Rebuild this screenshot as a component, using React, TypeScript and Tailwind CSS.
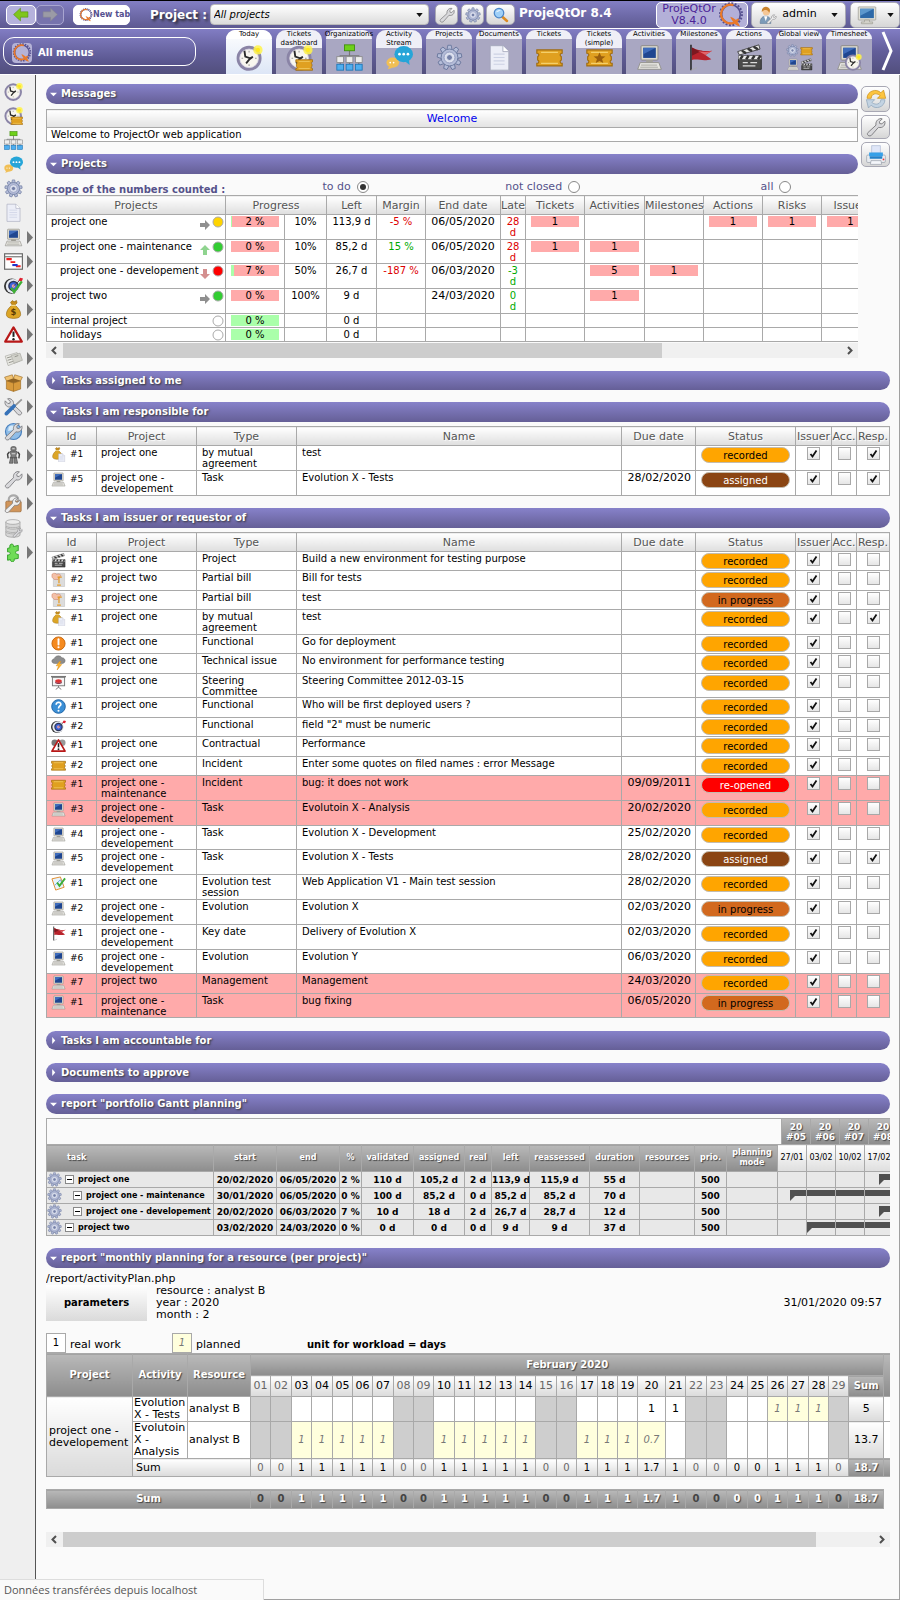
import React from "react";

type P = { n: string; className?: string };

const Gear = ({ fill = "#b4bcd8" }: { fill?: string }) => (
  <g>
    {[0, 40, 80, 120, 160, 200, 240, 280, 320].map((a) => (
      <path key={a} d="M13 7 L14 1.500 H18 L19 7 Z" fill={fill} stroke="#66749a" strokeWidth="1" transform={`rotate(${a} 16 16)`} />
    ))}
    <circle cx="16" cy="16" r="10" fill={fill} stroke="#66749a" />
    <circle cx="16" cy="16" r="6.500" fill="#dde1ef" stroke="#8993b8" />
    <circle cx="16" cy="16" r="3.500" fill="#7480a8" stroke="#e8ebf5" />
  </g>
);
const Clock = () => (
  <g>
    <circle cx="15.500" cy="17" r="13" fill="#f8f6ee" stroke="#8a84a6" strokeWidth="3.600" />
    <circle cx="15.500" cy="17" r="11" fill="none" stroke="#d8d4e4" strokeWidth="1" />
    <path d="M15.500 8v2M15.500 24v2M6.500 17h2M22.500 17h2" stroke="#999" strokeWidth="1.200" />
    <path d="M10 8l1 7 6 2 3-2-4 3-4 5" fill="none" stroke="#2a2a2a" strokeWidth="2.200" />
    <circle cx="26" cy="7" r="5.500" fill="#fff34a" opacity=".85" />
    <circle cx="26" cy="7" r="2.500" fill="#ffe81c" />
  </g>
);
const Ticket = () => (
  <g>
    <path d="M1 7H31V11c-3 0-3 3-1 4v4c-2 1-2 4 1 4v3H1V23c3 0 3-3 1-4v-4c2-1 2-4-1-4Z" fill="#e0a020" stroke="#a06c10" strokeWidth="1.400" />
    <path d="M6 10h20M6 23h20" stroke="#f4cf6a" strokeWidth="1.400" />
  </g>
);
const Computer = () => (
  <g>
    <rect x="6" y="2" width="20" height="17" rx="1" fill="#dddad0" stroke="#85837c" />
    <rect x="8.500" y="4.500" width="15" height="12" fill="#1f4690" />
    <path d="M8.500 4.500h15L8.500 12Z" fill="#3f6cbb" />
    <path d="M12 19h8v3h-8Z" fill="#a3a199" />
    <path d="M5 22h22l3 8H2Z" fill="#e6e5e0" stroke="#8e8d87" />
    <path d="M6 25h19M5 27.500h21" stroke="#a3a29c" />
  </g>
);
const Doc = () => (
  <g>
    <path d="M5 2h15l7 7v22H5Z" fill="#eceef7" stroke="#a3a7ba" />
    <path d="M20 2v7h7" fill="#fff" stroke="#a3a7ba" />
    <path d="M9 12h13M9 16h13M9 20h13M9 24h13" stroke="#cbd1e4" strokeWidth="1.200" />
  </g>
);
const Clap = () => (
  <g>
    <path d="M3 14h27v16H3Z" fill="#4a4a4a" stroke="#222" />
    <path d="M2 9 27 1l1.500 5L4 13Z" fill="#e8e8e8" stroke="#333" />
    <path d="M7 8l5 3M14 5.500l5 3M21 3.300l5 3" stroke="#333" strokeWidth="3" />
    <path d="M3 14h27v4H3Z" fill="#e8e8e8" />
    <path d="M8 14l-3 4M15 14l-3 4M22 14l-3 4M29 14l-3 4" stroke="#333" strokeWidth="3" />
    <path d="M8 22h6M17 22h8M8 26h15" stroke="#ddd" strokeWidth="1.600" />
  </g>
);
const Wrench = ({ c = "#d9d9dc" }: { c?: string }) => (
  <path d="M3 25 16 13c-1-5 2-10 8-10.500l2 .5-4.500 4.500.5 3 3.500.5 4.500-4.500c2 7-4 12-10 10L8.500 29.500c-4 2.500-8-1.500-5.500-4.500Z" fill={c} stroke="#7d7d80" strokeWidth="1.500" />
);
const Bag = () => (
  <g>
    <path d="M11 4l3-3 3 2 4-2 1 4-4 4h-4Z" fill="#c78d1b" stroke="#8a5d08" />
    <path d="M13 9h6c6 5 9 10 9 15 0 4-3 7-12 7S4 28 4 24c0-5 3-10 9-15Z" fill="#dca526" stroke="#94660d" />
    <path d="M12 9h8" stroke="#f7df91" strokeWidth="2" />
  </g>
);
const Warn = () => (
  <g>
    <path d="M16 4 30 28H2Z" fill="#fff" stroke="#b81818" strokeWidth="3.600" strokeLinejoin="round" />
    <path d="M16 11v9" stroke="#222" strokeWidth="3.400" />
    <circle cx="16" cy="24" r="2" fill="#222" />
  </g>
);
const Target = () => (
  <g>
    <circle cx="13" cy="17" r="13" fill="#333" />
    <circle cx="15" cy="17" r="12" fill="#e8ebf2" />
    <circle cx="16" cy="17" r="9" fill="#2c3558" />
    <circle cx="16" cy="17" r="6.500" fill="#3c63d8" />
    <circle cx="16" cy="17" r="3" fill="#e9a0b0" />
    <path d="M16 17 29 5" stroke="#444" strokeWidth="1.500" />
    <path d="M24 8l3-5 5 1-2 5Z" fill="#e02030" />
  </g>
);

function draw(n: string): React.ReactNode {
  switch (n) {
    case "clock": return <Clock />;
    case "clockTicket": return <><Clock /><g transform="translate(11 14) scale(.66)"><Ticket /></g></>;
    case "org": return (
      <g>
        <path d="M16 8v7M5 18v-4h22v4M16 14v10M5 20v5M27 20v5" fill="none" stroke="#777" strokeWidth="1.400" />
        <rect x="10" y="1" width="12" height="7" fill="#6ed01a" stroke="#3d8c08" />
        {[1, 12, 23].map((x) => <g key={x}><rect x={x} y="15" width="8" height="7" fill="#eee" stroke="#888" /><rect x={x} y="24" width="8" height="7" fill="#4eaef0" stroke="#1c74b4" /></g>)}
      </g>
    );
    case "chat": return (
      <g>
        <ellipse cx="8" cy="22" rx="7.500" ry="6" fill="#f1bf55" /><path d="M4 26l-2 4 6-2Z" fill="#f1bf55" />
        <ellipse cx="21" cy="12" rx="11" ry="9.500" fill="#26a5d8" /><path d="M22 20l6 5-1-7Z" fill="#26a5d8" />
        <circle cx="16" cy="12" r="1.600" fill="#fff" /><circle cx="21" cy="12" r="1.600" fill="#fff" /><circle cx="26" cy="12" r="1.600" fill="#fff" />
        <circle cx="5" cy="22" r="1" fill="#fff" /><circle cx="9" cy="22" r="1" fill="#fff" />
      </g>
    );
    case "gear": return <Gear />;
    case "doc": return <Doc />;
    case "ticket": return <Ticket />;
    case "ticketStar": return <><Ticket /><path d="M16 10l2 4.500 5 .3-4 3 1.500 4.700L16 20l-4.500 2.500L13 17.800l-4-3 5-.3Z" fill="#9a5e0c" /></>;
    case "computer": return <Computer />;
    case "flag": return <><path d="M5 1h1.800v30H5Z" fill="#222" /><path d="M7 4c8 4 16 5 24 4l-8 5 7 5c-10 3-16-1-23 1Z" fill="#b8232c" /><path d="M7 4c5 3 8 4 12 4L7 14Z" fill="#7c1820" /><path d="M14 8c6 2 11 2 17 0l-8 5Z" fill="#e0646a" /><path d="M6 31l7-3" stroke="#aaa" /></>;
    case "clap": return <Clap />;
    case "global": return <><g transform="scale(.48)"><Gear /></g><g transform="translate(17 1) scale(.46)"><Ticket /></g><g transform="translate(1 17) scale(.46)"><Computer /></g><g transform="translate(17 17) scale(.46)"><Clap /></g></>;
    case "timesheet": return <><Computer /><g transform="translate(10 11) scale(.65)"><Clock /></g></>;
    case "wrench": return <Wrench />;
    case "search": return <><path d="M18 19l10 9" stroke="#dc8b22" strokeWidth="5" strokeLinecap="round" /><circle cx="12" cy="12" r="9.500" fill="#9fd0f8" stroke="#4b86c8" strokeWidth="2.500" /><path d="M6 11c2-5 7-6 10-3-4 0-7 1-10 3Z" fill="#fff" /></>;
    case "user": return <><path d="M2 31c0-9 4-13 10-13s9 4 9 13Z" fill="#7c9bb8" stroke="#5b7894" /><path d="M9 18l3 9 3-9Z" fill="#fff" /><circle cx="13" cy="10" r="6.500" fill="#f5c796" /><path d="M5 11C4 2 12-1 17 3c4 3 2 7 1 9-1-4-4-5-8-5-2 0-3 2-5 4Z" fill="#c9822c" /><g transform="translate(13 14) scale(.58)"><Wrench c="#eee" /></g></>;
    case "monitor": return <><rect x="2" y="3" width="28" height="21" rx="1" fill="#e1e0d6" stroke="#8e8d86" /><rect x="5" y="6" width="22" height="15" fill="#2d69a8" /><path d="M5 6h22L5 17Z" fill="#5b97cd" /><path d="M12 24h8v3h5v3H7v-3h5Z" fill="#d2d1c9" stroke="#99988f" /></>;
    case "refresh": return <><path d="M3 15C3 4 17 0 23 7l4-4 3 12H18l4-4C16 6 9 9 9 15Z" fill="#fcc43f" stroke="#c98c12" /><path d="M29 17C29 28 15 32 9 25l-4 4-3-12h12l-4 4c6 5 13 2 13-4Z" fill="#c3d3e2" stroke="#8ba2b8" /></>;
    case "printer": return <><path d="M9 1h14v12H9Z" fill="#dfe6f8" stroke="#a8b4d0" /><rect x="1" y="16" width="30" height="12" rx="2" fill="#e8ebef" stroke="#9299a4" /><path d="M5 12h22v6H5Z" fill="#36a0e8" /><path d="M6 18h20v4H6Z" fill="#2380c8" /><path d="M8 25h16l1 6H7Z" fill="#f4f6fa" stroke="#9299a4" /><circle cx="28" cy="23" r="1.400" fill="#e33" /></>;
    case "right": return <path d="M3 11h14V4l13 12-13 12v-7H3Z" fill="#9b9ba6" stroke="#85858f" />;
    case "left": return <path d="M29 11H15V4L2 16l13 12v-7h14Z" fill="#7fc61c" stroke="#4f8a0a" />;
    case "logo": return (
      <g fill="none">
        <circle cx="16" cy="15" r="13.500" stroke="#565190" strokeWidth="2.500" strokeDasharray="2.400 1.840" />
        <circle cx="16" cy="15" r="11.500" stroke="#565190" strokeWidth="2" />
        <path d="M19 4a11.500 11.500 0 1 0 6 17" stroke="#e9792a" strokeWidth="2.800" /><path d="M15 18c5 1 10 6 12 12-5-1-9-5-12-12Z" fill="#e9792a" />
      </g>
    );
    case "gantt": return <><rect x="1" y="3" width="30" height="26" fill="#fff" stroke="#6b6b6b" strokeWidth="2" /><path d="M1 8h30" stroke="#777" strokeWidth="2" /><path d="M4 12h9M20 24h8" stroke="#e22" strokeWidth="3.500" /><path d="M11 17h8" stroke="#e22" strokeWidth="3" /><path d="M14 22h9" stroke="#23c" strokeWidth="3.500" /></>;
    case "target": return <Target />;
    case "targetCheck": return <><Target /><path d="M12 20l5 7L30 9" fill="none" stroke="#3fae36" strokeWidth="4" /></>;
    case "bag": return <><Bag /><text x="16" y="26" textAnchor="middle" fontSize="14" fontWeight="bold" fill="#5b3c05" fontFamily="DejaVu Sans">$</text></>;
    case "bagDoc": return <><g transform="translate(0 0) scale(.85)"><Bag /></g><g transform="translate(13 13) scale(.6)"><Doc /></g></>;
    case "bill": return <><path d="M9 3h20v28H5V14Z" fill="#dcdcdc" stroke="#b4b4b4" /><path d="M2 5c4-4 8-2 10 0l5-1 4 3-6 9H7L2 11Z" fill="#f3c0a8" stroke="#c9755c" /><path d="M17 10v14M13 28h8M14 11h9" stroke="#e59a24" strokeWidth="2.600" /></>;
    case "warn": return <Warn />;
    case "warnRed": return <><circle cx="8" cy="10" r="7" fill="#777" /><circle cx="24" cy="10" r="7" fill="#999" /><Warn /></>;
    case "cards": return <><path d="M2 12 22 6l5 14L7 28Z" fill="#e9e9e4" stroke="#a1a19a" /><path d="M12 11 27 7l4 12-14 5Z" fill="#d2d2cb" stroke="#a1a19a" /><path d="M5 15l7-2M6 19l7-2M8 23l7-2M18 13l6-2" stroke="#8d8d86" strokeWidth="1.500" /></>;
    case "box": return <><path d="M4 13h24v14l-12 4L4 27Z" fill="#d89a3c" stroke="#95641c" /><path d="M4 13 1 7l13-4 2 6 2-6 13 4-3 6-12 4Z" fill="#f0c271" stroke="#95641c" /><path d="M4 13l12-4 12 4-12 4Z" fill="#8f6223" /><path d="M16 17v14" stroke="#95641c" /></>;
    case "tools": return <><g transform="translate(32 0) scale(-1 1)"><Wrench /></g><path d="M30 4 16 17" stroke="#999" strokeWidth="3" /><path d="M17 15 4 28" stroke="#3672b8" strokeWidth="6" strokeLinecap="round" /></>;
    case "globe": return <><circle cx="16" cy="16" r="13.500" fill="#8fbde8" stroke="#4a80bd" strokeWidth="2" /><path d="M8 8c5-4 11-2 11 2l-6 4-6 1Z" fill="#d8ebfa" /><Wrench /></>;
    case "robot": return <g fill="#808080" stroke="#444"><rect x="11.500" y="1" width="9" height="7.500" rx="3" /><path d="M10 9h12l-2 8 2 3H10l2-3Z" /><path d="M9 10l-3 4 1 7M23 10l3 4-1 7" fill="none" strokeWidth="2.500" /><path d="M11 20h4v9h-6Z" /><path d="M17 20h4l2 9h-6Z" /><path d="M13 13h6M14 4.500h4" stroke="#ddd" strokeWidth="1.500" /></g>;
    case "lock": return <><path d="M8 14V9c0-9 16-9 16 0v5" fill="none" stroke="#a9a9a9" strokeWidth="3.500" /><rect x="3" y="12" width="26" height="18" rx="2" fill="#d1955a" stroke="#8f5c28" /><g transform="translate(0 4) scale(.9)"><Wrench c="#eee" /></g></>;
    case "db": return <g fill="#d6d6d6" stroke="#8f8f8f">{[21, 13, 5].map((y) => <g key={y}><path d={`M3 ${y}v6c0 5 24 5 24 0v-6`} /><ellipse cx="15" cy={y} rx="12" ry="4" fill="#ececec" /></g>)}<g transform="translate(14 14) scale(.55)"><Wrench /></g></g>;
    case "puzzle": return <path d="M10 8c-2-8 7-8 6-2l8-2v9c-6-1-6 7 0 6v7l-7 1c2 6-7 6-6 1l-5 1v-9c6 1 6-6 0-5V9Z" fill="#6fdc57" stroke="#2c9a22" strokeWidth="1.500" />;
    case "excl": return <><circle cx="16" cy="16" r="14" fill="#f58a1f" stroke="#c9660b" strokeWidth="2" /><path d="M16 7v11" stroke="#fff" strokeWidth="4" strokeLinecap="round" /><circle cx="16" cy="24" r="2.300" fill="#fff" /></>;
    case "storm": return <><path d="M8 18c-8 0-8-9-1-10 2-8 14-8 16-2 8-1 10 11 2 12Z" fill="#8d8d8d" stroke="#666" /><path d="M18 14l-7 9h5l-3 9 10-12h-5l3-6Z" fill="#ffb52b" stroke="#d98a12" /></>;
    case "board": return <><path d="M0 2h32v3H0Z" fill="#777" /><rect x="3" y="5" width="26" height="18" fill="#f4f4f4" stroke="#777" strokeWidth="2" /><ellipse cx="16" cy="13" rx="7" ry="4" fill="#d33" /><path d="M9 14c3 4 11 4 14 0v3c-3 3-11 3-14 0Z" fill="#8a3a50" /><path d="M16 23v4M10 31l6-5 6 5" stroke="#777" strokeWidth="2" fill="none" /></>;
    case "question": return <><circle cx="16" cy="16" r="14.500" fill="#3b8fd6" stroke="#1d62a4" strokeWidth="2" /><path d="M11 12c0-7 11-6 10 0-1 3-5 3-5 8" fill="none" stroke="#fff" strokeWidth="3.500" /><circle cx="16" cy="25" r="2.200" fill="#fff" /></>;
    case "session": return <><path d="M2 6 20 2l8 22-18 6Z" fill="#e8f3fb" stroke="#e08b2a" strokeWidth="2" /><path d="M8 20 20 8l5 10" stroke="#5aa6dd" strokeWidth="2" fill="none" /><path d="M13 14l5 7L30 5" stroke="#3fae36" strokeWidth="4" fill="none" /></>;
    default: return null;
  }
}
const Icon = ({ n, className = "size-[15px]" }: P) => (
  <svg viewBox="0 0 32 32" aria-hidden="true" className={`shrink-0 ${className}`}>{draw(n)}</svg>
);

const HEAD = "bg-linear-to-b from-white to-[#dedede] text-[11px] leading-[13px] font-normal text-[#555] [text-shadow:1px_1px_1px_#fff]";
const CELL = "border border-[#a9a9a9]";
const DARK = "bg-linear-to-b from-[#b9b9b9] to-[#8d8d8d] font-bold text-white [text-shadow:1px_1px_1px_#444]";
const BTN = "flex items-center justify-center rounded-[5px] border border-[#a8a8b4] bg-linear-to-b from-white to-[#d6d6d6]";

function Section({ title, open = true }: { title: string; open?: boolean }) {
  return (
    <button type="button" aria-expanded={open} className={`flex w-full items-center gap-1 rounded-full bg-linear-to-b from-[#8782ca] to-[#655f97] pl-1 text-left text-[10px] leading-3 font-bold text-white [text-shadow:1px_1px_2px_#333] ${open ? "h-5" : "h-[19px]"}`}>
      <svg viewBox="0 0 8 8" className="size-[7px] shrink-0" aria-hidden="true">
        <path d={open ? "M0 2h8L4 6Z" : "M2.500 0 6 4 2.500 8Z"} fill="#fff" />
      </svg>
      {title}
    </button>
  );
}

function Scroll({ thumb }: { thumb: string }) {
  return (
    <div className="flex h-[15px] items-center bg-[#f0f0f0]">
      <svg viewBox="0 0 17 15" className="h-[15px] w-[17px] shrink-0" aria-hidden="true"><path d="M10 4 6.500 7.500 10 11" fill="none" stroke="#505050" strokeWidth="2" /></svg>
      <div className="h-full flex-1"><div className={`h-full bg-[#cdcdcd] ${thumb}`} /></div>
      <svg viewBox="0 0 17 15" className="h-[15px] w-[17px] shrink-0" aria-hidden="true"><path d="M7 4l3.500 3.500L7 11" fill="none" stroke="#505050" strokeWidth="2" /></svg>
    </div>
  );
}

const Caret = () => <svg viewBox="0 0 8 5" className="h-[4px] w-[7px] shrink-0" aria-hidden="true"><path d="M0 0h8L4 5Z" fill="#111" /></svg>;

const tabs: [string[], string][] = [
  [["Today"], "clock"], [["Tickets", "dashboard"], "clockTicket"], [["Organizations"], "org"], [["Activity", "Stream"], "chat"],
  [["Projects"], "gear"], [["Documents"], "doc"], [["Tickets"], "ticket"], [["Tickets", "(simple)"], "ticketStar"],
  [["Activities"], "computer"], [["Milestones"], "flag"], [["Actions"], "clap"], [["Global view"], "global"], [["Timesheet"], "timesheet"],
];

function TopBar() {
  return (
    <header className="border-t border-black">
      <div className="flex h-[27px] items-center bg-linear-to-b from-[#837fc4] to-[#5d5991] pl-[6px]">
        <button type="button" aria-label="Back" className="flex h-5 w-[30px] items-center justify-center rounded-[5px] border border-white bg-[#b5b2dc]"><Icon n="left" className="h-[17px] w-5" /></button>
        <button type="button" aria-label="Forward" className="flex h-5 w-7 items-center justify-center rounded-[5px] border border-[#a8a5d0] bg-[#7773ad]"><Icon n="right" className="h-[17px] w-5" /></button>
        <button type="button" className="ml-[9px] flex h-5 w-[57px] items-center rounded-[5px] border border-white bg-white pl-[5px] text-[8px] font-bold whitespace-nowrap text-[#565190]"><Icon n="logo" className="size-[14px]" />New tab</button>
        <label htmlFor="project" className="ml-[20px] w-[60px] text-[12px] font-bold whitespace-nowrap text-white [text-shadow:2px_2px_3px_#222]">Project :</label>
        <div className="grid h-[21px] w-[219px] items-center rounded-[4px] border border-[#bbb] bg-linear-to-b from-white to-[#dcdcdc]">
          <select id="project" className="col-start-1 row-start-1 h-full appearance-none bg-transparent pl-[3px] text-[10px] text-black italic"><option>All projects</option></select>
          <div className="pointer-events-none col-start-1 row-start-1 flex justify-end pr-[5px]"><Caret /></div>
        </div>
        <button type="button" aria-label="Tools" className={`${BTN} ml-[6px] h-[21px] w-[23px]`}><Icon n="wrench" className="size-4" /></button>
        <button type="button" aria-label="Settings" className={`${BTN} ml-[3px] h-[21px] w-[23px]`}><Icon n="gear" className="size-4" /></button>
        <button type="button" aria-label="Search" className={`${BTN} ml-[2px] h-[21px] w-[29px]`}><Icon n="search" className="size-4" /></button>
        <h1 className="ml-[4px] flex-1 pb-1 text-[12px] leading-[14px] font-bold whitespace-nowrap text-white">ProjeQtOr 8.4</h1>
        <a href="#about" className="flex h-[26px] w-[92px] items-center justify-between rounded-[5px] border border-white bg-[#b3b0d8] px-[3px] text-center text-[11px] leading-[12px] text-[#4b2296]">
          <span>ProjeQtOr V8.4.0</span><Icon n="logo" className="size-[26px]" />
        </a>
        <button type="button" className={`${BTN} ml-[3px] h-[26px] w-[95px] text-[11px] text-black`}><Icon n="user" className="mr-[5px] size-[18px]" /><span className="mr-[14px]">admin</span><Caret /></button>
        <button type="button" aria-label="Display" className={`${BTN} ml-[4px] h-[26px] w-[50px] gap-[10px]`}><Icon n="monitor" className="size-[20px]" /><Caret /></button>
      </div>
      <nav className="flex h-[47px] items-start border-y border-white bg-linear-to-b from-[#827dc4] via-[#625e9a] to-[#524f7d]">
        <button type="button" className="mt-2 ml-[3px] flex h-[29px] w-[193px] items-center gap-[6px] rounded-[11px] border border-white bg-linear-to-b from-[#7a76b8] to-[#55528a] pt-[2px] pl-2 text-[10px] font-bold text-white">
          <span className="rounded-[4px] bg-[#b5b2d6]"><Icon n="logo" className="size-5" /></span>All menus
        </button>
        <div className="ml-[30px] flex flex-1 gap-1 pt-px">
          {tabs.map(([label, icon], i) => (
            <a key={icon} href={`#${icon}`} className={`flex h-[44px] w-[46px] shrink-0 flex-col items-center rounded-t-[10px] ${i === 0 ? "bg-linear-to-b from-white to-[#dde6f6]" : "bg-[#a9a7c2]"}`}>
              <span className={`flex w-full flex-col items-center rounded-t-[10px] text-[7px] leading-[9px] whitespace-nowrap text-black ${i === 0 ? "bg-white" : "bg-[#efeff7]"}`}>{label.map((l) => <span key={l}>{l}</span>)}</span>
              <Icon n={icon} className={label.length > 1 ? "mt-[-4px] size-[27px]" : "mt-[5px] size-[27px]"} />
            </a>
          ))}
        </div>
        <button type="button" aria-label="Next menus" className="mr-[6px] h-[44px] w-[13px]"><svg viewBox="0 0 13 44" className="h-[44px] w-[13px]"><path d="M2 3l8 19L2 41" fill="none" stroke="#fff" strokeWidth="3" /></svg></button>
      </nav>
    </header>
  );
}

const side = ["clock", "clockTicket", "org", "chat", "gear", "doc", "computer", "gantt", "targetCheck", "bag", "warn", "cards", "box", "tools", "globe", "robot", "wrench", "lock", "db", "puzzle"];
function SideBar() {
  return (
    <aside className="w-9 shrink-0 border-r border-[#555] bg-[#efefef] pt-[7px]">
      <div className="flex h-[480px] flex-col justify-between">
        {side.map((n, i) => (
          <button key={n} type="button" aria-label={n} className="flex h-[19px] items-center gap-1 pl-1">
            <Icon n={n} className="size-[19px]" />
            {i > 5 && n !== "db" && <svg viewBox="0 0 5 12" className="h-[13px] w-[6px]" preserveAspectRatio="none" aria-hidden="true"><path d="M0 0l5 6-5 6Z" fill="#777" /></svg>}
          </button>
        ))}
      </div>
    </aside>
  );
}

type Pr = { name: string; sub?: boolean; arrow?: string; dot: string; pct: string; green?: string; exp?: string; left: string; margin?: string; end?: string; late?: string; ok?: boolean; counts: string[]; h: string };
const projects: Pr[] = [
  { name: "project one", arrow: "r", dot: "#ffd400", pct: "2 %", green: "w-px", exp: "10%", left: "113,9 d", margin: "-5 %", end: "06/05/2020", late: "28 d", counts: ["1", "", "", "1", "1", "1"], h: "h-[25px]" },
  { name: "project one - maintenance", sub: true, arrow: "u", dot: "#32cd32", pct: "0 %", exp: "10%", left: "85,2 d", margin: "15 %", end: "06/05/2020", late: "28 d", counts: ["1", "1", "", "", "", ""], h: "h-[24px]" },
  { name: "project one - developement", sub: true, arrow: "d", dot: "#ff0000", pct: "7 %", green: "w-[3px]", exp: "50%", left: "26,7 d", margin: "-187 %", end: "06/03/2020", late: "-3 d", ok: true, counts: ["", "5", "1", "", "", ""], h: "h-[25px]" },
  { name: "project two", arrow: "r", dot: "#32cd32", pct: "0 %", exp: "100%", left: "9 d", end: "24/03/2020", late: "0 d", ok: true, counts: ["", "1", "", "", "", ""], h: "h-[25px]" },
  { name: "internal project", dot: "#ffffff", pct: "0 %", left: "0 d", counts: ["", "", "", "", "", ""], h: "h-[14px]" },
  { name: "holidays", sub: true, dot: "#ffffff", pct: "0 %", left: "0 d", counts: ["", "", "", "", "", ""], h: "h-[14px]" },
];
const arrowRot: Record<string, [number, string]> = { r: [0, "#8f8f8f"], u: [-90, "#8fd48f"], d: [90, "#d48f8f"] };

function Projects() {
  return (
    <div className="overflow-hidden">
      <table className="w-[834px] table-fixed border-collapse bg-white text-[10px] leading-[11px]">
        <colgroup>
          <col className="w-[179px]" /><col className="w-[59px]" /><col className="w-[42px]" /><col className="w-[50px]" /><col className="w-[49px]" /><col className="w-[75px]" /><col className="w-[25px]" /><col className="w-[59px]" /><col className="w-[60px]" /><col className="w-[59px]" /><col className="w-[59px]" /><col className="w-[59px]" /><col />
        </colgroup>
        <thead>
          <tr className="h-[19px]">
            {["Projects", "Progress", "Left", "Margin", "End date", "Late", "Tickets", "Activities", "Milestones", "Actions", "Risks", "Issues"].map((h, i) => (
              <th key={h} colSpan={i === 1 ? 2 : 1} className={`${CELL} ${HEAD} whitespace-nowrap`}>{h}</th>
            ))}
          </tr>
        </thead>
        <tbody>
          {projects.map((p) => (
            <tr key={p.name} className={`${p.h} text-center align-top`}>
              <td className={`${CELL} pt-px text-left`}>
                <div className={`flex h-3 items-start pr-px ${p.sub ? "pl-[13px]" : "pl-1"}`}>
                  <span className="flex-1 whitespace-nowrap">{p.name}</span>
                  {p.arrow && <svg viewBox="0 0 10 10" className="mt-[4px] mr-[2px] h-[10px] w-[10px] shrink-0" aria-hidden="true"><path d="M0 3h5V0l5 5-5 5V7H0Z" fill={arrowRot[p.arrow][1]} transform={`rotate(${arrowRot[p.arrow][0]} 5 5)`} /></svg>}
                  <svg viewBox="0 0 12 12" className="size-3 shrink-0" aria-hidden="true"><circle cx="6" cy="6" r="5" fill={p.dot} stroke="#aaa" /></svg>
                </div>
              </td>
              <td className={`${CELL} px-[5px] pt-px`}>
                <div className={`grid ${p.exp ? "bg-[#ffaaaa]" : "bg-[#aaffaa]"}`}>
                  {p.green && <div className={`col-start-1 row-start-1 bg-[#aaffaa] ${p.green}`} />}
                  <span className="col-start-1 row-start-1">{p.pct}</span>
                </div>
              </td>
              <td className={`${CELL} pt-px`}>{p.exp}</td>
              <td className={`${CELL} pt-px whitespace-nowrap`}>{p.left}</td>
              <td className={`${CELL} pt-px whitespace-nowrap ${p.margin?.startsWith("-") ? "text-[#dd0000]" : "text-[#00aa00]"}`}>{p.margin}</td>
              <td className={`${CELL} pt-px text-[11px]`}>{p.end}</td>
              <td className={`${CELL} px-[5px] pt-px ${p.ok ? "text-[#00aa00]" : "text-[#dd0000]"}`}>{p.late}</td>
              {p.counts.map((c, i) => <td key={i} className={`${CELL} px-[5px] pt-px`}>{c && <div className="bg-[#ffaaaa]">{c}</div>}</td>)}
            </tr>
          ))}
        </tbody>
      </table>
    </div>
  );
}

function Check({ on, label }: { on: boolean; label: string }) {
  return (
    <span className="mx-auto grid size-[13px]">
      <input type="checkbox" defaultChecked={on} aria-label={label} className="peer col-start-1 row-start-1 size-[13px] appearance-none border border-[#a8a8a8] bg-linear-to-b from-white to-[#e6e6e6]" />
      <svg viewBox="0 0 13 13" className="pointer-events-none invisible col-start-1 row-start-1 size-[13px] peer-checked:visible" aria-hidden="true"><path d="M3.500 7l2 2.500L9.500 3.500" fill="none" stroke="#111" strokeWidth="1.800" /></svg>
    </span>
  );
}

const R = "bg-[#ffa500] text-black", I = "bg-[#d2691e] text-black", A = "bg-[#8b4513] text-white", O = "bg-[#ff0000] text-white";
const statusText: Record<string, string> = { [R]: "recorded", [I]: "in progress", [A]: "assigned", [O]: "re-opened" };
type Task = [icon: string, id: string, project: string, type: string, name: string, due: string, status: string, resp: boolean, h: string, late?: boolean];
const one = "project one", dev = "project one - developement", mnt = "project one - maintenance";
const H19 = "h-[19px]", H20 = "h-[20px]", H24 = "h-[24px]", H25 = "h-[25px]";
const mine: Task[] = [
  ["bagDoc", "#1", one, "by mutual agreement", "test", "", R, true, H25],
  ["computer", "#5", dev, "Task", "Evolution X - Tests", "28/02/2020", A, true, H25],
];
const issued: Task[] = [
  ["clap", "#1", one, "Project", "Build a new environment for testing purpose", "", R, false, H19],
  ["bill", "#2", "project two", "Partial bill", "Bill for tests", "", R, false, H20],
  ["bill", "#3", one, "Partial bill", "test", "", I, false, H19],
  ["bagDoc", "#1", one, "by mutual agreement", "test", "", R, true, H25],
  ["excl", "#1", one, "Functional", "Go for deployment", "", R, false, H19],
  ["storm", "#1", one, "Technical issue", "No environment for performance testing", "", R, false, H20],
  ["board", "#1", one, "Steering Committee", "Steering Committee 2012-03-15", "", R, false, H24],
  ["question", "#1", one, "Functional", "Who will be first deployed users ?", "", R, false, H20],
  ["target", "#2", "", "Functional", "field \"2\" must be numeric", "", R, false, H19],
  ["warnRed", "#1", one, "Contractual", "Performance", "", R, false, H20],
  ["ticket", "#2", one, "Incident", "Enter some quotes on filed names : error Message", "", R, false, H19],
  ["ticket", "#1", mnt, "Incident", "bug: it does not work", "09/09/2011", O, false, H25, true],
  ["computer", "#3", dev, "Task", "Evolutoin X - Analysis", "20/02/2020", R, false, H25, true],
  ["computer", "#4", dev, "Task", "Evolution X - Development", "25/02/2020", R, false, H24],
  ["computer", "#5", dev, "Task", "Evolution X - Tests", "28/02/2020", A, true, H25],
  ["session", "#1", one, "Evolution test session", "Web Application V1 - Main test session", "28/02/2020", R, false, H25],
  ["computer", "#2", dev, "Evolution", "Evolution X", "02/03/2020", I, false, H25],
  ["flag", "#1", dev, "Key date", "Delivery of Evolution X", "02/03/2020", R, false, H25],
  ["computer", "#6", dev, "Evolution", "Evolution Y", "06/03/2020", R, false, H24],
  ["computer", "#7", "project two", "Management", "Management", "24/03/2020", R, false, H20, true],
  ["computer", "#1", mnt, "Task", "bug fixing", "06/05/2020", I, false, H24, true],
];

function Tasks({ rows }: { rows: Task[] }) {
  return (
    <table className="w-full table-fixed border-collapse bg-white text-[10px] leading-[11px]">
      <colgroup>
        <col className="w-[50px]" /><col className="w-[100px]" /><col className="w-[100px]" /><col /><col className="w-[74px]" /><col className="w-[100px]" /><col className="w-[36px]" /><col className="w-[25px]" /><col className="w-[33px]" />
      </colgroup>
      <thead>
        <tr className="h-[19px]">{["Id", "Project", "Type", "Name", "Due date", "Status", "Issuer", "Acc.", "Resp."].map((h) => <th key={h} className={`${CELL} ${HEAD} whitespace-nowrap`}>{h}</th>)}</tr>
      </thead>
      <tbody>
        {rows.map(([icon, id, project, type, name, due, status, resp, h, late], i) => (
          <tr key={i} className={`align-top ${h} ${late ? "bg-[#ffaaaa]" : ""}`}>
            <td className={`${CELL} pt-px pl-1`}><div className="flex items-center gap-1 text-[9px]"><Icon n={icon} />{id}</div></td>
            <td className={`${CELL} pt-px pl-1`}>{project}</td>
            <td className={`${CELL} pt-px pl-[5px]`}>{type}</td>
            <td className={`${CELL} pt-px pl-[5px]`}>{name}</td>
            <td className={`${CELL} pt-px pr-1 text-right text-[11px]`}>{due}</td>
            <td className={`${CELL} pt-px`}><div className={`mx-auto flex h-4 w-[89px] items-center justify-center rounded-full border border-[#c4bcae] ${status}`}>{statusText[status]}</div></td>
            <td className={`${CELL} pt-px`}><Check on label={`Issuer ${id} ${name}`} /></td>
            <td className={`${CELL} pt-px`}><Check on={false} label={`Accountable ${id} ${name}`} /></td>
            <td className={`${CELL} pt-px`}><Check on={resp} label={`Responsible ${id} ${name}`} /></td>
          </tr>
        ))}
      </tbody>
    </table>
  );
}

const gantt: [string, boolean, string[], number, number][] = [
  [one, false, ["20/02/2020", "06/05/2020", "2 %", "110 d", "105,2 d", "2 d", "113,9 d", "115,9 d", "55 d", "", "500", ""], 3, 14],
  [mnt, true, ["30/01/2020", "06/05/2020", "0 %", "100 d", "85,2 d", "0 d", "85,2 d", "85,2 d", "70 d", "", "500", ""], 0, 12],
  [dev, true, ["20/02/2020", "06/03/2020", "7 %", "10 d", "18 d", "2 d", "26,7 d", "28,7 d", "12 d", "", "500", ""], 3, 14],
  ["project two", false, ["03/02/2020", "24/03/2020", "0 %", "0 d", "0 d", "0 d", "9 d", "9 d", "37 d", "", "500", ""], 1, 0],
];
function Gantt() {
  return (
    <div className="overflow-hidden">
      <div className="flex h-[26px] w-[851px] border-t border-l border-[#a9a9a9]">
        <div className="flex-1" />
        {["#05", "#06", "#07", "#08"].map((w) => <div key={w} className={`${DARK} w-[29px] border-l border-[#a9a9a9] pt-[3px] text-center text-[9px] leading-[10px]`}>20<br />{w}</div>)}
      </div>
      <table className="w-[848px] table-fixed border-collapse bg-[#e8e8e8] text-center text-[9px] leading-[10px] font-bold">
        <colgroup>
          <col className="w-[167px]" /><col className="w-[63px]" /><col className="w-[63px]" /><col className="w-[22px]" /><col className="w-[52px]" /><col className="w-[51px]" /><col className="w-[27px]" /><col className="w-[38px]" /><col className="w-[60px]" /><col className="w-[50px]" /><col className="w-[55px]" /><col className="w-[32px]" /><col className="w-[51px]" /><col className="w-[29px]" /><col className="w-[29px]" /><col className="w-[29px]" /><col />
        </colgroup>
        <thead>
          <tr className="h-[27px] text-[8px]">
            {["task", "start", "end", "%", "validated", "assigned", "real", "left", "reassessed", "duration", "resources", "prio.", "planning mode"].map((h, i) => <th key={h} className={`${CELL} ${DARK} ${i === 0 ? "pl-5 text-left" : ""}`}>{h}</th>)}
            {["27/01", "03/02", "10/02", "17/02"].map((h) => <th key={h} className={`${CELL} bg-linear-to-b from-white to-[#dedede] font-normal`}>{h}</th>)}
          </tr>
        </thead>
        <tbody>
          {gantt.map(([name, sub, vals, col, off]) => (
            <tr key={name} className="h-4">
              <td className={CELL}>
                <div className="flex h-[15px] items-center overflow-hidden text-[8px] whitespace-nowrap">
                  <Icon n="gear" className="size-[15px]" />
                  <button type="button" aria-label={`Collapse ${name}`} className={`mr-1 flex size-[9px] shrink-0 items-center justify-center border border-[#888] bg-white ${sub ? "ml-[11px]" : "ml-[3px]"}`}><span className="h-px w-[5px] bg-black" /></button>
                  {name}
                </div>
              </td>
              {vals.map((v, i) => <td key={i} className={`${CELL} whitespace-nowrap`}>{v}</td>)}
              {[0, 1, 2, 3].map((i) => (
                <td key={i} className={CELL}>
                  {i >= col && <svg className="block h-[11px] w-full" aria-hidden="true"><rect x={i === col ? off : 0} width="100%" height="6" fill="#505050" />{i === col && <path d={`M${off} 0h5v6l-5 5Z`} fill="#505050" />}</svg>}
                </td>
              ))}
            </tr>
          ))}
        </tbody>
      </table>
    </div>
  );
}

const days = Array.from({ length: 29 }, (_, i) => i + 1);
const off = [1, 2, 8, 9, 15, 16, 22, 23, 29];
const week = [3, 4, 5, 6, 7, 10, 11, 12, 13, 14, 17, 18, 19];
const total = (d: number) => (d === 20 ? "1.7" : off.includes(d) || d === 24 || d === 25 ? "0" : "1");
const pad = (d: number) => String(d).padStart(2, "0");
const dayW = (d: number) => (d === 20 ? "w-[28px]" : [2, 4, 7, 10, 12, 15, 17, 22, 24, 27].includes(d) ? "w-[21px]" : "w-[20px]");
const GREY = "bg-linear-to-b from-white to-[#dadada]";

function DayCells({ get }: { get: (d: number) => [string, boolean] }) {
  return <>{days.map((d) => {
    const [v, planned] = get(d);
    return <td key={d} className={`${CELL} ${off.includes(d) ? "bg-[#cecece]" : planned ? "bg-[#ffffdd] text-[10px] text-[#777] italic" : ""}`}>{v}</td>;
  })}</>;
}
const Cols = () => <colgroup><col className="w-[86px]" /><col className="w-[55px]" /><col className="w-[63px]" />{days.map((d) => <col key={d} className={dayW(d)} />)}<col className="w-[35px]" /><col /></colgroup>;

function Monthly() {
  return (
    <div className="overflow-hidden text-[11px] leading-3">
      <p className="pt-[5px]">/report/activityPlan.php</p>
      <div className="flex h-9 items-center">
        <div className={`${GREY} flex h-full w-[101px] items-center justify-center text-[10px] font-bold`}>parameters</div>
        <p className="flex-1 pl-[9px]">resource : analyst B<br />year : 2020<br />month : 2</p>
        <p className="pr-2">31/01/2020 09:57</p>
      </div>
      <div className="mt-3 flex h-5 items-end">
        <span className="flex size-5 items-center justify-center border border-[#a9a9a9] bg-white text-[10px]">1</span>
        <span className="w-[106px] pb-[2px] pl-1">real work</span>
        <span className="flex size-5 items-center justify-center border border-[#a9a9a9] bg-[#ffffdd] text-[10px] text-[#777] italic">1</span>
        <span className="w-[115px] pb-[2px] pl-1">planned</span>
        <span className="pb-[2px] text-[10px] font-bold">unit for workload = days</span>
      </div>
      <table className="w-[872px] table-fixed border-collapse bg-white text-center">
        <Cols />
        <thead className="text-[10px]">
          <tr className="h-[22px]">
            {["Project", "Activity", "Resource"].map((h) => <th key={h} rowSpan={2} className={`${CELL} ${DARK}`}>{h}</th>)}
            <th colSpan={30} className={`${CELL} ${DARK}`}>February 2020</th>
            <th rowSpan={2} className={`${CELL} ${DARK}`} />
          </tr>
          <tr className="h-[21px]">
            {days.map((d) => <th key={d} className={`${CELL} ${GREY} text-[11px] font-normal ${off.includes(d) ? "text-[#666]" : ""}`}>{pad(d)}</th>)}
            <th className={`${CELL} ${DARK}`}>Sum</th>
          </tr>
        </thead>
        <tbody>
          <tr className="h-[25px]">
            <td rowSpan={3} className={`${CELL} ${GREY} pl-[2px] text-left`}>project one - developement</td>
            <td className={`${CELL} pl-px text-left`}>Evolution X - Tests</td>
            <td className={`${CELL} pl-px text-left`}>analyst B</td>
            <DayCells get={(d) => [[20, 21, 26, 27, 28].includes(d) ? "1" : "", d > 25]} />
            <td className={`${CELL} ${GREY}`}>5</td><td className={CELL} />
          </tr>
          <tr className="h-[37px]">
            <td className={`${CELL} pl-px text-left`}>Evolutoin X - Analysis</td>
            <td className={`${CELL} pl-px text-left`}>analyst B</td>
            <DayCells get={(d) => (d === 20 ? ["0.7", true] : [week.includes(d) ? "1" : "", week.includes(d)])} />
            <td className={`${CELL} ${GREY}`}>13.7</td><td className={CELL} />
          </tr>
          <tr className="h-[18px]">
            <td colSpan={2} className={`${CELL} ${GREY} pl-[3px] text-left`}>Sum</td>
            {days.map((d) => <td key={d} className={`${CELL} ${GREY} text-[10px] ${off.includes(d) ? "text-[#666]" : ""}`}>{total(d)}</td>)}
            <td className={`${CELL} ${DARK} text-[10px]`}>18.7</td><td className={`${CELL} ${DARK}`} />
          </tr>
        </tbody>
      </table>
      <table className="mt-3 w-[838px] table-fixed border-collapse text-center text-[10px]">
        <colgroup><col className="w-[204px]" />{days.map((d) => <col key={d} className={dayW(d)} />)}<col /></colgroup>
        <tbody>
          <tr className="h-[19px]">
            <td className={`${CELL} ${DARK}`}>Sum</td>
            {days.map((d) => <td key={d} className={`${CELL} bg-linear-to-b from-[#b9b9b9] to-[#8d8d8d] font-bold ${off.includes(d) ? "text-[#444]" : "text-white [text-shadow:1px_1px_1px_#444]"}`}>{total(d)}</td>)}
            <td className={`${CELL} ${DARK}`}>18.7</td>
          </tr>
        </tbody>
      </table>
    </div>
  );
}

export default function App() {
  return (
    <div className="flex min-h-screen flex-col overflow-hidden bg-[#fafafa] font-['DejaVu_Sans',sans-serif] text-black">
      <TopBar />
      <div className="flex flex-1">
        <SideBar />
        <main className="min-w-0 flex-1 border-r border-b border-[#a0a0a0] pt-[9px] pr-[9px] pl-[10px]">
          <div className="flex gap-[3px]">
            <div className="min-w-0 flex-1">
              <Section title="Messages" />
              <table className="mt-[5px] w-full border-collapse bg-white text-[10px] leading-[11px]">
                <thead><tr className="h-[18px]"><th className={`${CELL} bg-linear-to-b from-white to-[#e2e2e2] text-[11px] font-normal text-[#0000ee]`}>Welcome</th></tr></thead>
                <tbody><tr className="h-[14px]"><td className={`${CELL} pl-1`}>Welcome to ProjectOr web application</td></tr></tbody>
              </table>
              <div className="mt-3"><Section title="Projects" /></div>
              <fieldset className="flex h-[21px] items-center pt-[5px] text-[11px] text-[#55528a]">
                <legend className="float-left w-[178px] pt-[5px] text-[10px] font-bold whitespace-nowrap">scope of the numbers counted :</legend>
                {["to do", "not closed", "all"].map((l, i) => (
                  <label key={l} className="flex flex-1 items-center gap-[6px]">
                    <span className="w-3/5 text-right">{l}</span>
                    <span className="grid size-3 place-items-center">
                      <input type="radio" name="scope" defaultChecked={i === 0} className="peer col-start-1 row-start-1 size-3 appearance-none rounded-full border border-[#888] bg-white" />
                      <span className="col-start-1 row-start-1 hidden size-[6px] rounded-full bg-[#333] peer-checked:block" />
                    </span>
                  </label>
                ))}
              </fieldset>
              <Projects />
              <div className="mt-px"><Scroll thumb="w-[77%]" /></div>
            </div>
            <div className="flex w-[29px] flex-col gap-[3px] pt-[2px]">
              <button type="button" aria-label="Refresh" className={`${BTN} h-[26px]`}><Icon n="refresh" className="size-[22px]" /></button>
              <button type="button" aria-label="Configure" className={`${BTN} h-6`}><Icon n="wrench" className="size-5" /></button>
              <button type="button" aria-label="Print" className={`${BTN} h-[25px]`}><Icon n="printer" className="size-5" /></button>
            </div>
          </div>
          <div className="mt-[13px]"><Section title="Tasks assigned to me" open={false} /></div>
          <div className="mt-3 mb-1"><Section title="Tasks I am responsible for" /></div>
          <Tasks rows={mine} />
          <div className="mt-3 mb-1"><Section title="Tasks I am issuer or requestor of" /></div>
          <Tasks rows={issued} />
          <div className="mt-[13px]"><Section title="Tasks I am accountable for" open={false} /></div>
          <div className="mt-[13px]"><Section title="Documents to approve" open={false} /></div>
          <div className="mt-3 mb-1"><Section title={"report \"portfolio Gantt planning\""} /></div>
          <Gantt />
          <div className="mt-3"><Section title={"report \"monthly planning for a resource (per project)\""} /></div>
          <Monthly />
          <div className="mt-[23px]"><Scroll thumb="w-[93%]" /></div>
        </main>
      </div>
      <div role="status" className="fixed bottom-0 left-0 flex h-[21px] w-[264px] items-center border-t border-r border-[#ddd] bg-[#fafafa] pl-1 font-['Open_Sans',sans-serif] text-[11px] text-[#555]">Données transférées depuis localhost</div>
    </div>
  );
}
